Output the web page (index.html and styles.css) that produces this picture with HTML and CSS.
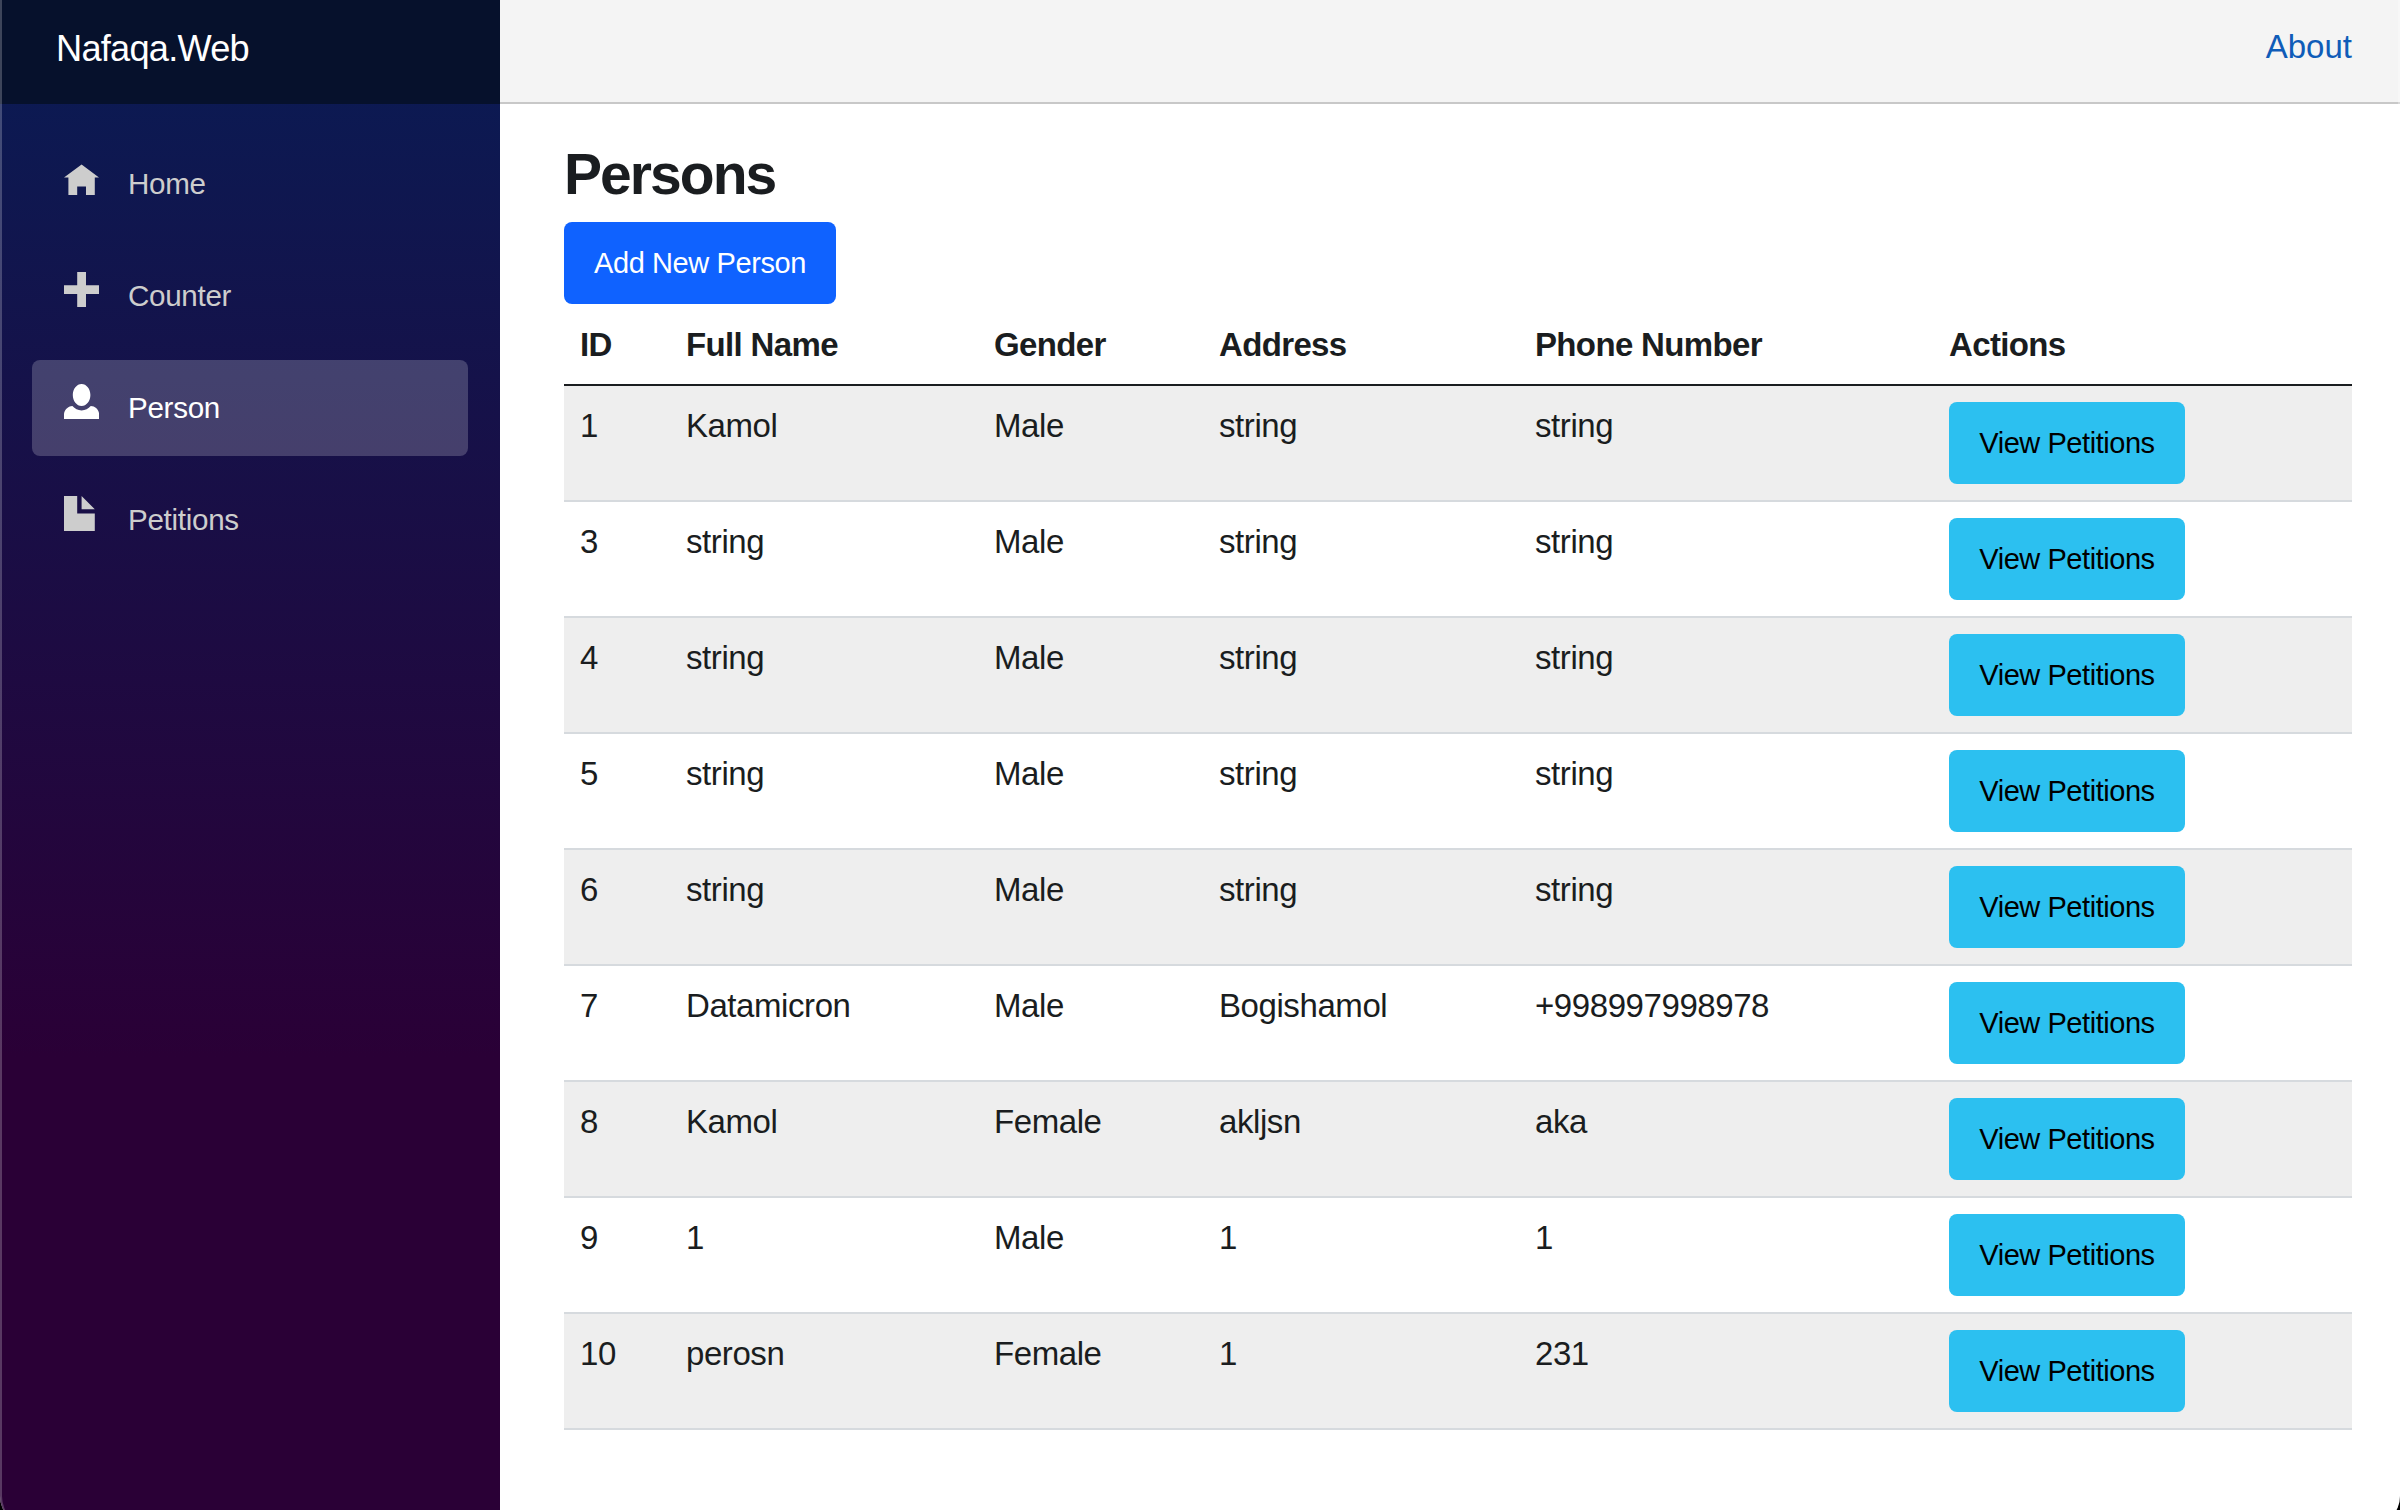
FILE: index.html
```html
<!DOCTYPE html>
<html lang="en">
<head>
<meta charset="utf-8">
<title>Persons</title>
<link rel="stylesheet" href="styles.css">
</head>
<body>
<div class="page">
  <aside class="sidebar">
    <div class="top-row brand-row"><a class="navbar-brand">Nafaqa.Web</a></div>
    <nav class="nav">
      <a class="nav-link"><svg class="oi" viewBox="0 0 8 8"><path d="M4 1l-4 3h1v4h2v-2h2v2h2v-4.03l1 .03-4-3z"/></svg><span>Home</span></a>
      <a class="nav-link"><svg class="oi" viewBox="0 0 8 8"><path d="M3 0v3h-3v2h3v3h2v-3h3v-2h-3v-3h-2z"/></svg><span>Counter</span></a>
      <a class="nav-link active"><svg class="oi" viewBox="0 0 8 8"><path d="M4 0c-1.1 0-2 1.12-2 2.5s.9 2.5 2 2.5 2-1.12 2-2.5-.9-2.5-2-2.5zm-2.09 5c-1.06.05-1.91.92-1.91 2v1h8v-1c0-1.08-.84-1.95-1.91-2-.54.61-1.28 1-2.09 1-.81 0-1.55-.39-2.09-1z"/></svg><span>Person</span></a>
      <a class="nav-link"><svg class="oi" viewBox="0 0 8 8"><path d="M0 0v8h7v-4h-4v-4h-3zm4 0v3h3l-3-3z"/></svg><span>Petitions</span></a>
    </nav>
  </aside>
  <main class="main">
    <div class="top-row about-row"><a class="about">About</a></div>
    <article class="content">
      <h3 class="title">Persons</h3>
      <button class="btn btn-primary">Add New Person</button>
      <table class="table">
        <colgroup><col class="c-id"><col class="c-name"><col class="c-gender"><col class="c-address"><col class="c-phone"><col></colgroup>
        <thead><tr><th>ID</th><th>Full Name</th><th>Gender</th><th>Address</th><th>Phone Number</th><th>Actions</th></tr></thead>
        <tbody>
          <tr><td>1</td><td>Kamol</td><td>Male</td><td>string</td><td>string</td><td><button class="btn btn-info">View Petitions</button></td></tr>
          <tr><td>3</td><td>string</td><td>Male</td><td>string</td><td>string</td><td><button class="btn btn-info">View Petitions</button></td></tr>
          <tr><td>4</td><td>string</td><td>Male</td><td>string</td><td>string</td><td><button class="btn btn-info">View Petitions</button></td></tr>
          <tr><td>5</td><td>string</td><td>Male</td><td>string</td><td>string</td><td><button class="btn btn-info">View Petitions</button></td></tr>
          <tr><td>6</td><td>string</td><td>Male</td><td>string</td><td>string</td><td><button class="btn btn-info">View Petitions</button></td></tr>
          <tr><td>7</td><td>Datamicron</td><td>Male</td><td>Bogishamol</td><td>+998997998978</td><td><button class="btn btn-info">View Petitions</button></td></tr>
          <tr><td>8</td><td>Kamol</td><td>Female</td><td>akljsn</td><td>aka</td><td><button class="btn btn-info">View Petitions</button></td></tr>
          <tr><td>9</td><td>1</td><td>Male</td><td>1</td><td>1</td><td><button class="btn btn-info">View Petitions</button></td></tr>
          <tr><td>10</td><td>perosn</td><td>Female</td><td>1</td><td>231</td><td><button class="btn btn-info">View Petitions</button></td></tr>
        </tbody>
      </table>
    </article>
  </main>
</div>
</body>
</html>
```
FILE: styles.css
```css
* { box-sizing: border-box; }

body {
  margin: 0;
  height: 1510px;
  overflow: hidden;
  background: #000;
  color: #1a1d20;
  font: 33px/48px "Liberation Sans", Arial, sans-serif;
  letter-spacing: -.42px;
}

/* The window's rounded bottom corners run past the viewport. */
.page {
  position: relative;
  display: flex;
  height: 1526px;
  overflow: hidden;
  border-radius: 0 0 30px 30px;
  background: #fff;
}

.page::after {
  content: "";
  position: absolute;
  inset: 0;
  border-left: 2px solid rgba(255, 255, 255, .22);
  border-right: 2px solid rgba(255, 255, 255, .3);
  border-radius: 0 0 30px 30px;
  pointer-events: none;
}

.sidebar {
  width: 500px;
  flex: none;
  background: linear-gradient(180deg, #091c55 0, #2a0036 1057px);
}

.top-row {
  display: flex;
  height: 104px;
}

.brand-row {
  align-items: center;
  padding: 0 56px 6px;
  background: #06112c;
}

.navbar-brand {
  color: #fff;
  font-size: 36.2px;
  letter-spacing: -.75px;
}

.nav {
  display: flex;
  flex-direction: column;
  gap: 16px;
  padding: 32px;
}

.nav-link {
  display: flex;
  height: 96px;
  padding: 0 32px;
  border-radius: 8px;
  color: #cdcdcd;
  font-size: 29.6px;
  line-height: 96px;
  letter-spacing: -.3px;
}

.nav-link.active {
  background: rgba(255, 255, 255, .2);
  color: #fff;
}

.oi {
  width: 35.2px;
  height: 35.2px;
  margin: 24px 28.8px 0 0;
  fill: currentColor;
}

.main {
  flex: 1;
}

.about-row {
  align-items: center;
  justify-content: flex-end;
  padding: 0 48px 8px 0;
  background: #f4f4f4;
  border-bottom: 2px solid #c8c8c8;
}

.about {
  color: #0f5cb8;
  letter-spacing: 0;
}

.content {
  padding: 37px 48px 0 64px;
}

.title {
  margin: 0 0 14px;
  font-size: 57px;
  line-height: 67px;
  font-weight: 700;
  letter-spacing: -1.95px;
}

.btn {
  display: block;
  height: 82px;
  padding: 1px 0 0;
  border: 0;
  border-radius: 8px;
  font: 29px/81px "Liberation Sans", Arial, sans-serif;
  letter-spacing: -.45px;
  text-align: center;
}

.btn-primary {
  width: 272px;
  background: #0f62ff;
  color: #fff;
  letter-spacing: -.4px;
}

.btn-info {
  width: 236px;
  background: #2cc0f0;
  color: #000;
}

.table {
  width: 100%;
  table-layout: fixed;
  border-collapse: separate;
  border-spacing: 0;
}

.c-id { width: 106px; }
.c-name { width: 308px; }
.c-gender { width: 225px; }
.c-address { width: 316px; }
.c-phone { width: 414px; }

th,
td {
  padding: 16px;
  border-bottom: 2px solid #d6dade;
  text-align: left;
  vertical-align: top;
}

th {
  padding: 17px 16px 15px;
  border-bottom-color: #1a1d20;
  letter-spacing: -.65px;
}

tbody tr:nth-child(odd) {
  background: #eee;
}
```
